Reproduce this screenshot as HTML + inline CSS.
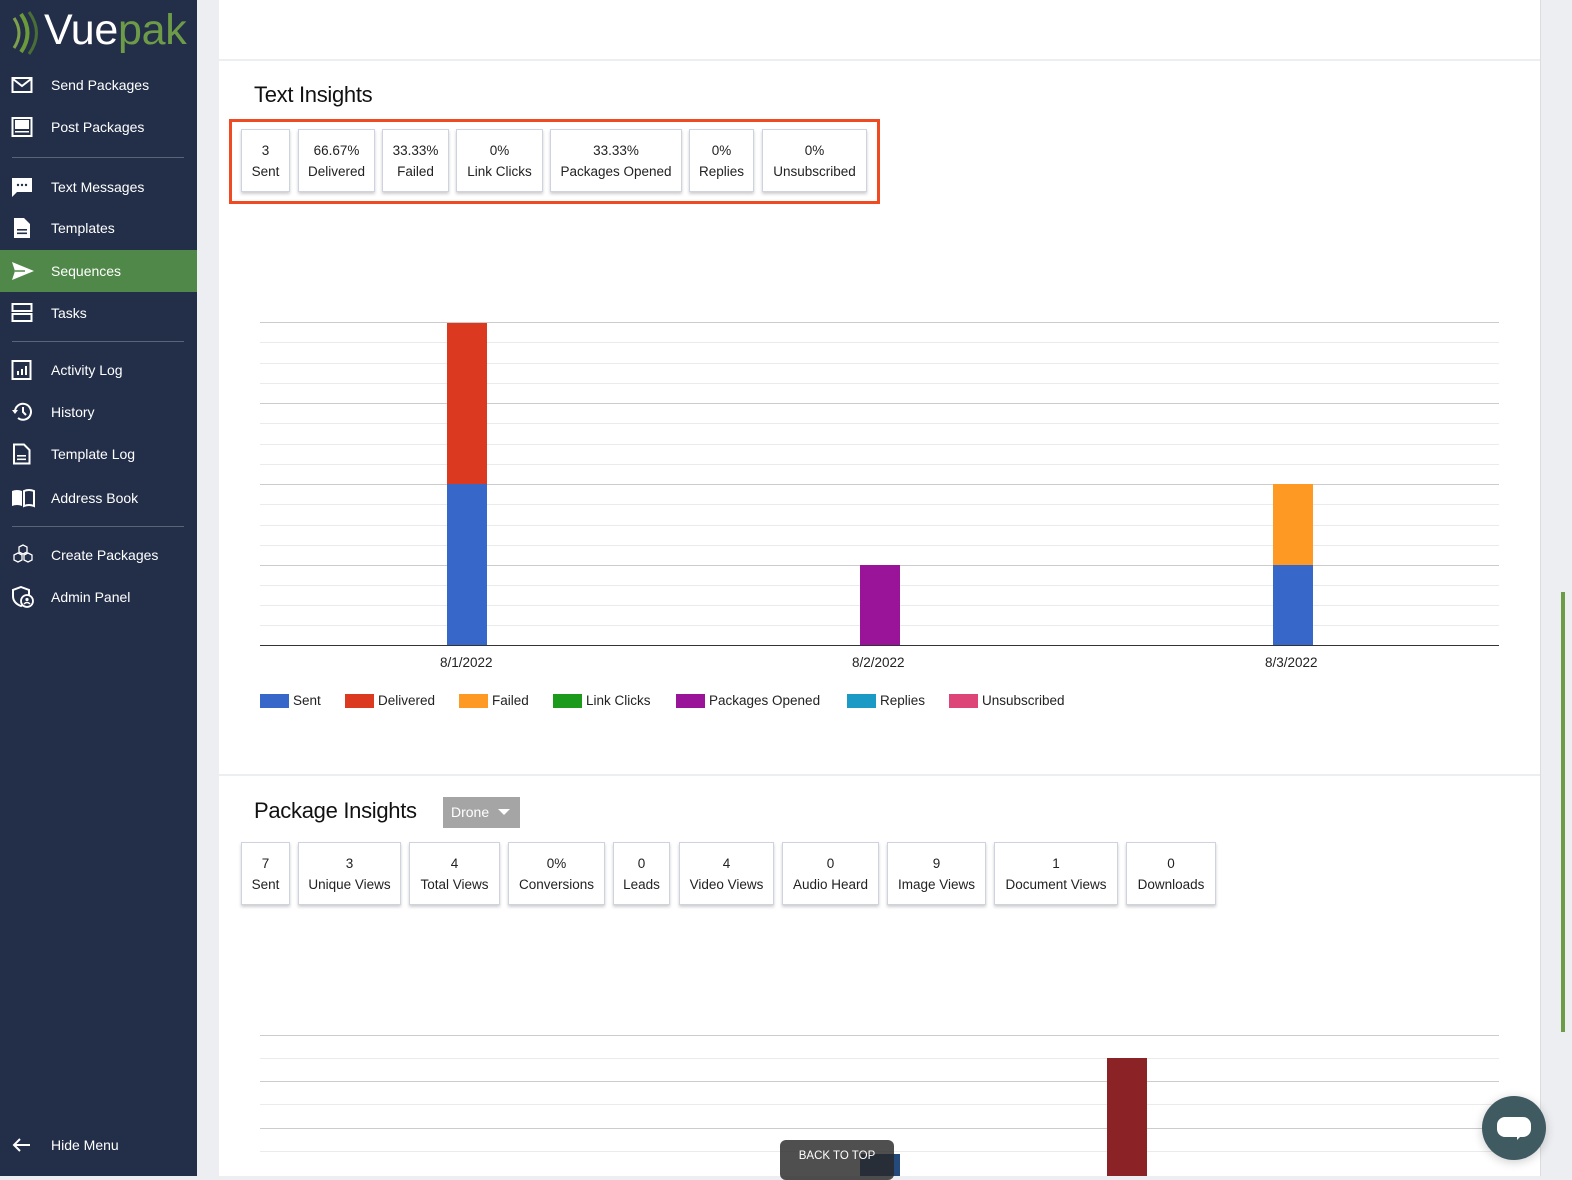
<!DOCTYPE html>
<html><head><meta charset="utf-8"><style>
*{margin:0;padding:0;box-sizing:border-box}
body{width:1572px;height:1176px;overflow:hidden;background:#eceef2;font-family:"Liberation Sans",sans-serif;position:relative}
.sb{position:absolute;left:0;top:0;width:197px;height:1176px;background:#232f49;color:#fff}
.it{position:absolute;left:0;width:197px;height:42px;font-size:14px;line-height:42px;padding-left:51px}
.it svg{position:absolute;left:11px;top:10px}
.dv{position:absolute;left:12px;width:172px;height:1px;background:#5a6478}
.panel{position:absolute;left:219px;width:1321px;background:#fff}
.h{position:absolute;font-size:22px;color:#111;font-weight:normal;letter-spacing:-0.3px}
.box{position:absolute;height:63px;border:1px solid #cfd3e0;box-shadow:0 2px 3px rgba(0,0,0,.2);background:#fff;text-align:center;font-size:13.5px;color:#222;line-height:21px;padding-top:10px;white-space:nowrap}
.lbl{position:absolute;font-size:13.5px;color:#222}
.lg{position:absolute;top:694px;width:29px;height:14px}
</style></head><body>
<div class="sb">
 <div style="position:absolute;left:10px;top:6px;width:185px;height:52px">
  <svg width="30" height="46" viewBox="0 0 30 46" style="position:absolute;left:0;top:4px"><path d="M4 8 Q14 23 4 38" stroke="#7fa04a" stroke-width="3" fill="none"/><path d="M11 4 Q24 23 11 42" stroke="#6a9a3a" stroke-width="4" fill="none"/><path d="M19 2 Q34 23 19 44" stroke="#5a8a30" stroke-width="3" fill="none" opacity=".7"/></svg>
  <span style="position:absolute;left:34px;top:0;font-size:43px;color:#fff;letter-spacing:-0.3px">Vue<span style="color:#6d9b48">pak</span></span>
 </div>
 <div class="it" style="top:64px"><svg width="22" height="22" viewBox="0 0 22 22"><rect x="1.5" y="4" width="19" height="14" fill="none" stroke="#fff" stroke-width="2"/><path d="M2 5 L11 12 L20 5" fill="none" stroke="#fff" stroke-width="2"/></svg>Send Packages</div>
 <div class="it" style="top:106px"><svg width="22" height="22" viewBox="0 0 22 22"><rect x="1.5" y="2" width="19" height="18" fill="none" stroke="#fff" stroke-width="2"/><rect x="4" y="4" width="14" height="9" fill="#fff"/><rect x="4" y="15" width="14" height="1.5" fill="#fff"/></svg>Post Packages</div>
 <div class="dv" style="top:157px"></div>
 <div class="it" style="top:166px"><svg width="22" height="22" viewBox="0 0 22 22"><path d="M1 2 H21 V16 H6 L1 21 Z" fill="#fff"/><circle cx="7" cy="9" r="1.2" fill="#232f49"/><circle cx="11" cy="9" r="1.2" fill="#232f49"/><circle cx="15" cy="9" r="1.2" fill="#232f49"/></svg>Text Messages</div>
 <div class="it" style="top:207px"><svg width="22" height="22" viewBox="0 0 22 22"><path d="M3 1 H13 L19 7 V21 H3 Z" fill="#fff"/><rect x="6" y="12" width="10" height="1.6" fill="#232f49"/><rect x="6" y="15.5" width="10" height="1.6" fill="#232f49"/></svg>Templates</div>
 <div class="it" style="top:250px;background:#4f8848"><svg width="24" height="22" viewBox="0 0 24 22"><path d="M1 2 L23 11 L1 20 L4 11 Z" fill="#fff"/><path d="M4 11 H14" stroke="#4f8848" stroke-width="1.5"/></svg>Sequences</div>
 <div class="it" style="top:292px"><svg width="22" height="22" viewBox="0 0 22 22"><rect x="1.5" y="2" width="19" height="7" fill="none" stroke="#fff" stroke-width="2"/><rect x="1.5" y="12" width="19" height="7" fill="none" stroke="#fff" stroke-width="2"/></svg>Tasks</div>
 <div class="dv" style="top:341px"></div>
 <div class="it" style="top:349px"><svg width="22" height="22" viewBox="0 0 22 22"><rect x="1.5" y="2" width="18" height="18" fill="none" stroke="#fff" stroke-width="2"/><rect x="6" y="12" width="2" height="4" fill="#fff"/><rect x="10" y="10" width="2" height="6" fill="#fff"/><rect x="14" y="7" width="2" height="9" fill="#fff"/></svg>Activity Log</div>
 <div class="it" style="top:391px"><svg width="24" height="22" viewBox="0 0 24 22"><path d="M4 11 A8 8 0 1 1 7 17" fill="none" stroke="#fff" stroke-width="2"/><path d="M1 9 L4 13 L7 9" fill="#fff"/><path d="M12 6 V11 L15 14" stroke="#fff" stroke-width="2" fill="none"/></svg>History</div>
 <div class="it" style="top:433px"><svg width="22" height="22" viewBox="0 0 22 22"><path d="M3 1.5 H13 L18.5 7 V20.5 H3 Z" fill="none" stroke="#fff" stroke-width="2"/><rect x="6" y="12" width="9" height="1.6" fill="#fff"/><rect x="6" y="15.5" width="9" height="1.6" fill="#fff"/></svg>Template Log</div>
 <div class="it" style="top:477px"><svg width="24" height="22" viewBox="0 0 24 22"><path d="M1 4 Q6 2 11 4 V19 Q6 17 1 19 Z" fill="#fff"/><path d="M13 4 Q18 2 23 4 V19 Q18 17 13 19 Z" fill="none" stroke="#fff" stroke-width="2"/></svg>Address Book</div>
 <div class="dv" style="top:526px"></div>
 <div class="it" style="top:534px"><svg width="24" height="22" viewBox="0 0 24 22"><g fill="none" stroke="#fff" stroke-width="1.3"><path d="M8 3 L12 1 L16 3 L16 8 L12 10 L8 8Z"/><path d="M3 11 L7 9 L11 11 L11 16 L7 18 L3 16Z"/><path d="M13 11 L17 9 L21 11 L21 16 L17 18 L13 16Z"/></g></svg>Create Packages</div>
 <div class="it" style="top:576px"><svg width="24" height="22" viewBox="0 0 24 22"><path d="M10 1 L18 4 V10 Q18 17 10 20 Q2 17 2 10 V4 Z" fill="none" stroke="#fff" stroke-width="2"/><circle cx="16" cy="15" r="6" fill="#232f49" stroke="#fff" stroke-width="1.8"/><circle cx="16" cy="13.5" r="1.6" fill="#fff"/><path d="M13 18 Q16 15 19 18" stroke="#fff" stroke-width="1.5" fill="none"/></svg>Admin Panel</div>
 <div class="it" style="top:1124px"><svg width="22" height="22" viewBox="0 0 22 22"><path d="M19 11 H3 M9 5 L3 11 L9 17" stroke="#fff" stroke-width="2" fill="none"/></svg>Hide Menu</div>
</div>

<div style="position:absolute;left:1540px;top:0;width:1px;height:1176px;background:#dcdde2"></div>
<div style="position:absolute;left:1561px;top:592px;width:4px;height:440px;background:#6d9b48"></div>

<div class="panel" style="top:0;height:59px"></div>
<div class="panel" style="top:61px;height:713px">
<svg width="1321" height="713" style="position:absolute;left:0;top:0">
 <g stroke="#ebebeb" stroke-width="1">
  <line x1="41" x2="1280" y1="281.5" y2="281.5"/><line x1="41" x2="1280" y1="302.5" y2="302.5"/><line x1="41" x2="1280" y1="322.5" y2="322.5"/>
  <line x1="41" x2="1280" y1="362.5" y2="362.5"/><line x1="41" x2="1280" y1="383.5" y2="383.5"/><line x1="41" x2="1280" y1="403.5" y2="403.5"/>
  <line x1="41" x2="1280" y1="443.5" y2="443.5"/><line x1="41" x2="1280" y1="464.5" y2="464.5"/><line x1="41" x2="1280" y1="484.5" y2="484.5"/>
  <line x1="41" x2="1280" y1="524.5" y2="524.5"/><line x1="41" x2="1280" y1="544.5" y2="544.5"/><line x1="41" x2="1280" y1="564.5" y2="564.5"/>
 </g>
 <g stroke="#cccccc"><line x1="41" x2="1280" y1="261.5" y2="261.5"/><line x1="41" x2="1280" y1="342.5" y2="342.5"/><line x1="41" x2="1280" y1="423.5" y2="423.5"/><line x1="41" x2="1280" y1="504.5" y2="504.5"/></g>
 <rect x="228" y="423" width="40" height="161" fill="#3667c9"/>
 <rect x="228" y="262" width="40" height="161" fill="#dc3a20"/>
 <rect x="641" y="504" width="40" height="80" fill="#991499"/>
 <rect x="1054" y="504" width="40" height="80" fill="#3667c9"/>
 <rect x="1054" y="423" width="40" height="81" fill="#fe9a23"/>
 <line x1="41" x2="1280" y1="584.5" y2="584.5" stroke="#333"/>
</svg>
<div class="h" style="left:35px;top:21px">Text Insights</div>
<div style="position:absolute;left:10px;top:58px;width:651px;height:85px;border:3px solid #f04a23"></div>
<div class="box" style="left:22px;top:68px;width:49px">3<br>Sent</div>
<div class="box" style="left:79px;top:68px;width:77px">66.67%<br>Delivered</div>
<div class="box" style="left:163px;top:68px;width:67px">33.33%<br>Failed</div>
<div class="box" style="left:237px;top:68px;width:87px">0%<br>Link Clicks</div>
<div class="box" style="left:331px;top:68px;width:132px">33.33%<br>Packages Opened</div>
<div class="box" style="left:470px;top:68px;width:65px">0%<br>Replies</div>
<div class="box" style="left:543px;top:68px;width:105px">0%<br>Unsubscribed</div>
<div class="lbl" style="left:221px;top:594px">8/1/2022</div>
<div class="lbl" style="left:633px;top:594px">8/2/2022</div>
<div class="lbl" style="left:1046px;top:594px">8/3/2022</div>
</div>
<div class="lg" style="left:260px;background:#3667c9"></div><div class="lbl" style="left:293px;top:693px">Sent</div>
<div class="lg" style="left:345px;background:#dc3a20"></div><div class="lbl" style="left:378px;top:693px">Delivered</div>
<div class="lg" style="left:459px;background:#fe9a23"></div><div class="lbl" style="left:492px;top:693px">Failed</div>
<div class="lg" style="left:553px;background:#1c9a1c"></div><div class="lbl" style="left:586px;top:693px">Link Clicks</div>
<div class="lg" style="left:676px;background:#991499"></div><div class="lbl" style="left:709px;top:693px">Packages Opened</div>
<div class="lg" style="left:847px;background:#1b9ac6"></div><div class="lbl" style="left:880px;top:693px">Replies</div>
<div class="lg" style="left:949px;background:#dd4477"></div><div class="lbl" style="left:982px;top:693px">Unsubscribed</div>

<div class="panel" style="top:776px;height:400px">
<svg width="1321" height="400" style="position:absolute;left:0;top:0">
 <g stroke="#ebebeb"><line x1="41" x2="1280" y1="282.5" y2="282.5"/><line x1="41" x2="1280" y1="328.5" y2="328.5"/><line x1="41" x2="1280" y1="375.5" y2="375.5"/></g>
 <g stroke="#cccccc"><line x1="41" x2="1280" y1="259.5" y2="259.5"/><line x1="41" x2="1280" y1="305.5" y2="305.5"/><line x1="41" x2="1280" y1="352.5" y2="352.5"/></g>
 <rect x="888" y="282" width="40" height="118" fill="#8a2226"/>
 <rect x="641" y="378" width="40" height="22" fill="#234a7a"/>
</svg>
<div class="h" style="left:35px;top:22px">Package Insights</div>
<div style="position:absolute;left:224px;top:21px;width:77px;height:31px;background:#a5a5a5;color:#fff;font-size:14px;line-height:31px;padding-left:8px">Drone <span style="display:inline-block;width:0;height:0;border-left:6px solid transparent;border-right:6px solid transparent;border-top:6px solid #fff;margin-left:5px;vertical-align:2px"></span></div>
<div class="box" style="left:22px;top:66px;width:49px">7<br>Sent</div>
<div class="box" style="left:79px;top:66px;width:103px">3<br>Unique Views</div>
<div class="box" style="left:190px;top:66px;width:91px">4<br>Total Views</div>
<div class="box" style="left:289px;top:66px;width:97px">0%<br>Conversions</div>
<div class="box" style="left:394px;top:66px;width:57px">0<br>Leads</div>
<div class="box" style="left:460px;top:66px;width:95px">4<br>Video Views</div>
<div class="box" style="left:563px;top:66px;width:97px">0<br>Audio Heard</div>
<div class="box" style="left:668px;top:66px;width:99px">9<br>Image Views</div>
<div class="box" style="left:775px;top:66px;width:124px">1<br>Document Views</div>
<div class="box" style="left:907px;top:66px;width:90px">0<br>Downloads</div>
</div>

<div style="position:absolute;left:780px;top:1140px;width:114px;height:40px;border-radius:6px;background:rgba(40,40,40,.82);color:#fff;font-size:11.5px;line-height:32px;text-align:center">BACK TO TOP</div>
<div style="position:absolute;left:1482px;top:1096px;width:64px;height:64px;border-radius:50%;background:#3f5a61;box-shadow:0 2px 10px rgba(0,0,0,.2)">
 <div style="position:absolute;left:15px;top:21px;width:34px;height:20px;border-radius:8px;background:#fff"></div>
 <div style="position:absolute;left:35px;top:38px;width:0;height:0;border-left:6px solid #fff;border-bottom:6px solid transparent"></div>
</div>
</body></html>
